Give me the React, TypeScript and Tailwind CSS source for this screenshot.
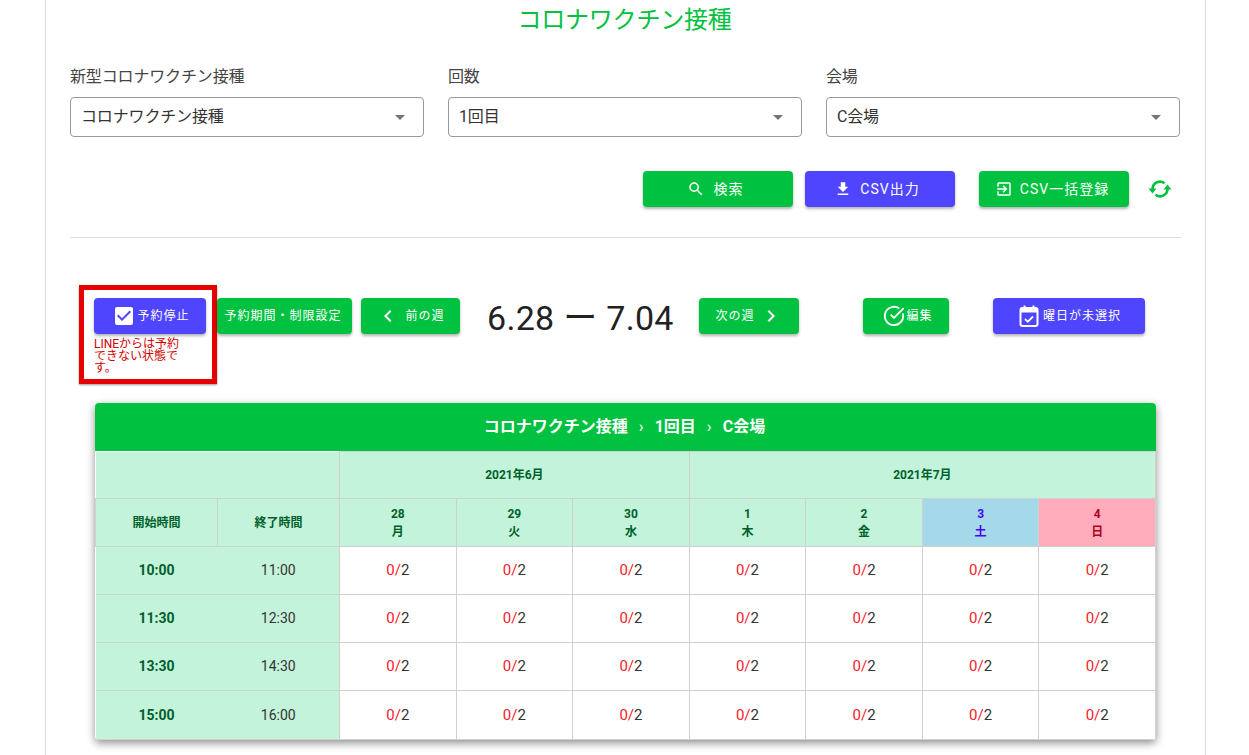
import { MdSearch, MdFileDownload, MdExitToApp, MdCheckBox, MdChevronLeft, MdChevronRight, MdArrowDropDown } from "react-icons/md";
import { CircleCheckBig } from "lucide-react";

const font = "font-['Roboto','Noto_Sans_CJK_JP',sans-serif]";
const days = [
  { d: "28", w: "月", c: "bg-[#c3f4db] text-[#00602a]" },
  { d: "29", w: "火", c: "bg-[#c3f4db] text-[#00602a]" },
  { d: "30", w: "水", c: "bg-[#c3f4db] text-[#00602a]" },
  { d: "1", w: "木", c: "bg-[#c3f4db] text-[#00602a]" },
  { d: "2", w: "金", c: "bg-[#c3f4db] text-[#00602a]" },
  { d: "3", w: "土", c: "bg-[#a3d9e8] text-[#4a00ff]" },
  { d: "4", w: "日", c: "bg-[#ffacbc] text-[#b00020]" },
];
const times = [
  ["10:00", "11:00"],
  ["11:30", "12:30"],
  ["13:30", "14:30"],
  ["15:00", "16:00"],
];

function Field({ label, value }: { label: string; value: string }) {
  return (
    <div className="w-[354px]">
      <div className="h-[32px] text-[16px] leading-[24px] tracking-[-0.15px] text-[#444]">{label}</div>
      <div className="flex h-[40px] items-center justify-between rounded border border-[#999] pl-[10px] pr-[11px] text-[16px] tracking-[-0.15px] text-[#333]">
        <span>{value}</span>
        <MdArrowDropDown className="text-[24px] text-[#757575]" />
      </div>
    </div>
  );
}

function Btn({ className, children }: { className: string; children: React.ReactNode }) {
  return (
    <div className={`flex h-[36px] items-center justify-center rounded text-white shadow-[0_2px_3px_rgba(0,0,0,0.3)] ${className}`}>
      {children}
    </div>
  );
}

// two arcs with heads on the left and right, not in the package's orientation
function SyncIcon() {
  return (
    <svg viewBox="0 0 24 24" className="ml-[19px] h-[24px] w-[24px] text-[#00c240]" fill="none">
      <path d="M16.5 6.2A7.5 7.5 0 0 0 4.5 12" stroke="currentColor" strokeWidth="2.6" />
      <path d="M7.5 17.8A7.5 7.5 0 0 0 19.5 12" stroke="currentColor" strokeWidth="2.6" />
      <path d="M0.5 11.5H8.5L4.5 16.5Z" fill="currentColor" />
      <path d="M15.5 12.5H23.5L19.5 7.5Z" fill="currentColor" />
    </svg>
  );
}

function CalendarIcon() {
  return (
    <svg viewBox="0 0 24 24" className="mr-[2px] h-[24px] w-[24px]" fill="none">
      <rect x="3.5" y="4" width="17" height="18" rx="2" stroke="white" strokeWidth="2" />
      <rect x="3.5" y="4" width="17" height="4.5" fill="white" />
      <path d="M7.5 1.5V5M16.5 1.5V5" stroke="white" strokeWidth="2" />
      <path d="M8 15l2.8 2.8L16 12.5" stroke="white" strokeWidth="1.8" />
    </svg>
  );
}

const thCell = "border border-[#d0d0d0] text-[12px] font-bold leading-[18px] text-center p-0";

export default function App() {
  return (
    <div className={`h-[755px] overflow-hidden bg-white ${font}`}>
      <div className="relative z-10 mx-[30px] h-0 shadow-[0_0_10px_rgba(0,0,0,0.2)]" />
      <div className="ml-[45px] h-[755px] w-[1161px] border-x border-[#ddd] px-[24px]">
        <h1 className="pr-[2px] pt-[4px] text-center text-[24px] leading-[32px] tracking-[-0.2px] text-[#00c240]">コロナワクチン接種</h1>
        <div className="mt-[29px] flex w-[1110px] gap-[24px]">
          <Field label="新型コロナワクチン接種" value="コロナワクチン接種" />
          <Field label="回数" value="1回目" />
          <Field label="会場" value="C会場" />
        </div>
        <div className="mt-[34px] flex items-center pl-[573px] text-[14px] tracking-[1px]">
          <Btn className="w-[150px] bg-[#00c240] pr-[6px]"><MdSearch className="mr-[9px] text-[18px]" />検索</Btn>
          <Btn className="ml-[12px] w-[150px] bg-[#4f45ff] pr-[6px]"><MdFileDownload className="mr-[8px] text-[18px]" />CSV出力</Btn>
          <Btn className="ml-[24px] w-[150px] bg-[#00c240] pr-[4px]"><MdExitToApp className="mr-[7px] text-[18px]" />CSV一括登録</Btn>
          <SyncIcon />
        </div>
        <div className="mt-[30px] h-px w-[1111px] bg-[#ddd]" />

        <div className="mt-[47px] flex items-start text-[12px] tracking-[1px]">
          <div className="ml-[9px] h-[99px] w-[138px] shrink-0 border-[5px] border-[#e60000] pl-[10px] pt-[8px] shadow-[0_1px_2px_rgba(0,0,0,0.4)]">
            <Btn className="w-[112px] bg-[#4f45ff] pl-[2px]"><MdCheckBox className="mr-[1px] text-[24px]" />予約停止</Btn>
            <p className="mt-[4px] w-[92px] text-[12px] leading-[12px] tracking-normal text-[#d00000]">LINEからは予約できない状態です。</p>
          </div>
          <Btn className="mt-[13px] w-[135px] shrink-0 bg-[#00c240] pr-[3px]">予約期間・制限設定</Btn>
          <Btn className="ml-[9px] mt-[13px] w-[99px] shrink-0 bg-[#00c240]"><MdChevronLeft className="mr-[5px] text-[24px]" />前の週</Btn>
          <div className="ml-[27px] mt-[11px] w-[186px] shrink-0 whitespace-nowrap text-[34px] leading-[44px] tracking-[0.3px] text-[#222]">6.28 ー 7.04</div>
          <Btn className="ml-[26px] mt-[13px] w-[100px] shrink-0 bg-[#00c240]">次の週<MdChevronRight className="ml-[4px] text-[24px]" /></Btn>
          <Btn className="ml-[64px] mt-[13px] w-[86px] shrink-0 bg-[#00c240] pl-[4px]"><CircleCheckBig className="mr-[1px] h-[22px] w-[22px]" />編集</Btn>
          <Btn className="ml-[44px] mt-[13px] w-[152px] shrink-0 bg-[#4f45ff]"><CalendarIcon />曜日が未選択</Btn>
        </div>

        <div className="ml-[25px] mt-[19px] w-[1061px] overflow-hidden rounded shadow-[0_3px_8px_rgba(0,0,0,0.45)]">
          <div className="flex h-[48px] items-center justify-center gap-[11px] bg-[#00c240] pr-[2px] text-[16px] font-bold text-white">
            <span>コロナワクチン接種</span><span className="font-normal">›</span><span>1回目</span><span className="font-normal">›</span><span>C会場</span>
          </div>
          <table className="w-[1061px] table-fixed border-collapse">
            <colgroup>
              <col className="w-[122px]" />
              <col className="w-[122px]" />
              {days.map((x) => <col key={x.d} />)}
            </colgroup>
            <thead>
              <tr className="h-[47px] bg-[#c3f4db] text-[#00602a]">
                <th colSpan={2} className="border-0 p-0" />
                <th colSpan={3} className={thCell}>2021年6月</th>
                <th colSpan={4} className={thCell}>2021年7月</th>
              </tr>
              <tr className="h-[48px] bg-[#c3f4db] text-[#00602a]">
                <th className={thCell}>開始時間</th>
                <th className={thCell}>終了時間</th>
                {days.map((x) => (
                  <th key={x.d} className={`${thCell} ${x.c}`}>{x.d}<br />{x.w}</th>
                ))}
              </tr>
            </thead>
            <tbody>
              {times.map(([a, b], i) => (
                <tr key={a} className={i === 3 ? "h-[49px]" : "h-[48px]"}>
                  <td className="border-y border-[#d0d0d0] bg-[#c3f4db] p-0 text-center text-[14px] font-bold text-[#00602a]">{a}</td>
                  <td className="border-y border-[#d0d0d0] bg-[#c3f4db] p-0 text-center text-[14px] text-[#333]">{b}</td>
                  {days.map((x) => (
                    <td key={x.d} className="border border-[#d0d0d0] p-0 text-center text-[15px] text-[#333]">
                      <span className="text-[#f5222d]">0/</span>2
                    </td>
                  ))}
                </tr>
              ))}
            </tbody>
          </table>
        </div>
      </div>
    </div>
  );
}
